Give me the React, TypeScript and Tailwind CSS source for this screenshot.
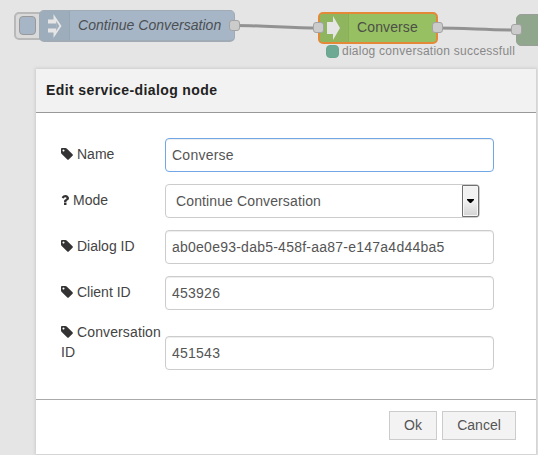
import type { ReactNode } from 'react';

function TagIcon() {
  return (
    <svg viewBox="0 0 1536 1536" className="mt-[4px] mr-1 h-3 w-3 shrink-0 fill-[#333]">
      <path transform="translate(0 -128)" d="M448 448q0-53-37.5-90.5t-90.5-37.5-90.5 37.5-37.5 90.5 37.5 90.5 90.5 37.5 90.5-37.5 37.5-90.5zm1067 576q0 53-37 90l-491 492q-39 37-91 37-53 0-90-37l-715-716q-38-37-64.5-101t-26.5-117v-416q0-52 38-90t90-38h416q53 0 117 26.5t102 64.5l715 714q37 39 37 91z" />
    </svg>
  );
}

function QuestionIcon() {
  return (
    <svg viewBox="384 256 1024 1280" className="mt-[5px] mr-1 h-[10px] w-2 shrink-0 fill-[#333]">
      <path d="M1088 1256v240q0 16-12 28t-28 12h-240q-16 0-28-12t-12-28v-240q0-16 12-28t28-12h240q16 0 28 12t12 28zm316-600q0 54-15.5 101t-35 76.5-55 59.5-57.5 43.5-61 35.5q-41 23-68.5 65t-27.5 67q0 17-12 32.5t-28 15.5h-240q-15 0-25.5-18.5t-10.5-37.5v-45q0-83 65-156.5t143-108.5q59-27 84-56t25-76q0-42-46.5-74t-107.5-32q-65 0-108 29-35 25-107 115-13 16-31 16-12 0-25-8l-164-125q-13-10-15.5-25t5.5-28q160-266 464-266 80 0 161 31t146 83 106 127.5 41 158.5z" />
    </svg>
  );
}

function Row({ label, icon, children }: { label: ReactNode; icon: ReactNode; children: ReactNode }) {
  return (
    <div className="mb-3 flex items-start">
      <div className="mt-[6px] flex w-[104px] shrink-0 leading-5">
        {icon}
        <span className="whitespace-nowrap">{label}</span>
      </div>
      {children}
    </div>
  );
}

function Field({ value, tone = 'border-[#ccc]' }: { value: string; tone?: string }) {
  return (
    <div className={`flex h-[34px] w-[329px] items-center rounded border bg-white px-[6px] tracking-[0.24px] text-[#555] shadow-[inset_0_1px_1px_rgba(0,0,0,0.075)] ${tone}`}>
      {value}
    </div>
  );
}

function Port({ place }: { place: string }) {
  return <div className={`absolute h-[11px] w-[11px] rounded-[3px] border border-[#a3a3a3] bg-[#cbcbcb] ${place}`} />;
}

function Canvas() {
  return (
    <div className="absolute inset-0">
      <svg className="absolute inset-0 h-[69px] w-[538px] fill-none stroke-[#929292] stroke-3">
        <path d="M235 25.5C265 25.5 289 28 319 28" />
        <path d="M437 28C465 28 487 30 517 30" />
      </svg>

      <div className="absolute top-[12px] left-[14px] h-7 w-9 rounded-[5px] border-2 border-[#b9b9b9] bg-[#dadada]" />
      <div className="absolute top-[16px] left-[19px] h-[19px] w-[17px] rounded-[4px] border border-[#999] bg-[#a6b6c6]" />
      <div className="absolute top-[10px] left-[39px] flex h-8 w-[196px] overflow-hidden rounded-[5px] border border-b-2 border-[#a0abb5] bg-[#a6b6c6]">
        <div className="flex w-[30px] items-center border-r border-[#98a6b4] bg-[#9eadbc] pl-2">
          <svg viewBox="0 0 14 26" className="h-[26px] w-[14px] fill-[#e5e5e5]">
            <path d="M0 6.5H5.5V1L13.5 13L5.5 25V19.5H0V15.5H8.3V10.5H0Z" />
            <path d="M8.2 8L11.3 13L8.2 18Z" className="fill-[#9eadbc]" />
          </svg>
        </div>
        <span className="pl-2 text-[14px] leading-[28px] tracking-[0.04px] text-[#4c4f52] italic">Continue Conversation</span>
      </div>
      <Port place="left-[229px] top-[20px]" />

      <div className="absolute top-[12px] left-[318px] flex h-8 w-[120px] overflow-hidden rounded-[5px] border-2 border-[#e38938] bg-[#97c063]">
        <div className="flex w-[29px] items-center border-r border-[#89af59] bg-[#8fb65e] pl-[7px]">
          <svg viewBox="0 0 13 24" className="h-6 w-[13px] fill-[#e5e5e5]">
            <path d="M0 6H6V0L13 12L6 24V18H0Z" />
          </svg>
        </div>
        <span className="pl-2 text-[14px] leading-[27px] tracking-[0.12px] text-[#4c4f46]">Converse</span>
      </div>
      <Port place="left-[313px] top-[22px]" />
      <Port place="left-[432px] top-[22px]" />
      <div className="absolute top-[45px] left-[326px] h-[13px] w-[13px] rounded-[4px] border border-[#69a68e] bg-[#6eaa93]" />
      <span className="absolute top-[43px] left-[342px] text-[12px] leading-4 tracking-[0.25px] whitespace-nowrap text-[#888]">dialog conversation successfull</span>

      <div className="absolute top-[14px] left-[516px] h-8 w-[60px] rounded-[5px] border border-[#999f98] bg-[#91a78d]" />
      <Port place="left-[511px] top-[24px]" />
    </div>
  );
}

export default function App() {
  return (
    <div className="relative h-[455px] w-[538px] overflow-hidden bg-[#e5e5e5] pt-[69px] pl-9 font-['Liberation_Sans',Arial,sans-serif] text-[14px] text-[#444]">
      <Canvas />
      <div className="relative flex h-[385px] w-[500px] flex-col bg-white shadow-[0_0_3px_1px_#ccc]">
        <div className="flex h-11 items-center border-b border-[#999] bg-[#f2f2f2] px-[10px] pb-px font-bold tracking-[0.4px] text-[#222]">
          Edit service-dialog node
        </div>
        <div className="flex-1 pt-[25px] pl-[25px]">
          <Row icon={<TagIcon />} label="Name">
            <Field value="Converse" tone="border-[#72a7e6]" />
          </Row>
          <Row icon={<QuestionIcon />} label="Mode">
            <div className="flex h-[34px] w-[315px] items-center justify-between rounded border border-[#ccc] bg-white pl-[10px] tracking-[0.12px] text-[#555]">
              Continue Conversation
              <div className="flex h-8 w-[17px] items-center justify-center rounded-r-[2px] border border-[#707070] bg-linear-to-b from-[#f2f2f2] from-50% to-[#d3d3d3] shadow-[inset_0_0_0_1px_#f7f7f7]">
                <svg viewBox="0 0 7 4" className="h-1 w-[7px] fill-black">
                  <path d="M0 0H7V1L4 4H3L0 1Z" />
                </svg>
              </div>
            </div>
          </Row>
          <Row icon={<TagIcon />} label="Dialog ID">
            <Field value="ab0e0e93-dab5-458f-aa87-e147a4d44ba5" />
          </Row>
          <Row icon={<TagIcon />} label="Client ID">
            <Field value="453926" />
          </Row>
          <div className="flex items-end">
            <div className="mb-[8px] w-[104px] shrink-0 leading-5">
              <div className="flex tracking-[0.12px] whitespace-nowrap"><TagIcon />Conversation</div>
              <div>ID</div>
            </div>
            <Field value="451543" />
          </div>
        </div>
        <div className="flex h-[55px] shrink-0 gap-[5px] border-t border-[#aaa] pt-[11px] pl-[353px] text-[#555]">
          <div className="flex h-[29px] w-12 items-center justify-center border border-[#ccc] bg-[#f3f3f3]">Ok</div>
          <div className="flex h-[29px] w-[74px] items-center justify-center border border-[#ccc] bg-[#f3f3f3]">Cancel</div>
        </div>
      </div>
    </div>
  );
}
